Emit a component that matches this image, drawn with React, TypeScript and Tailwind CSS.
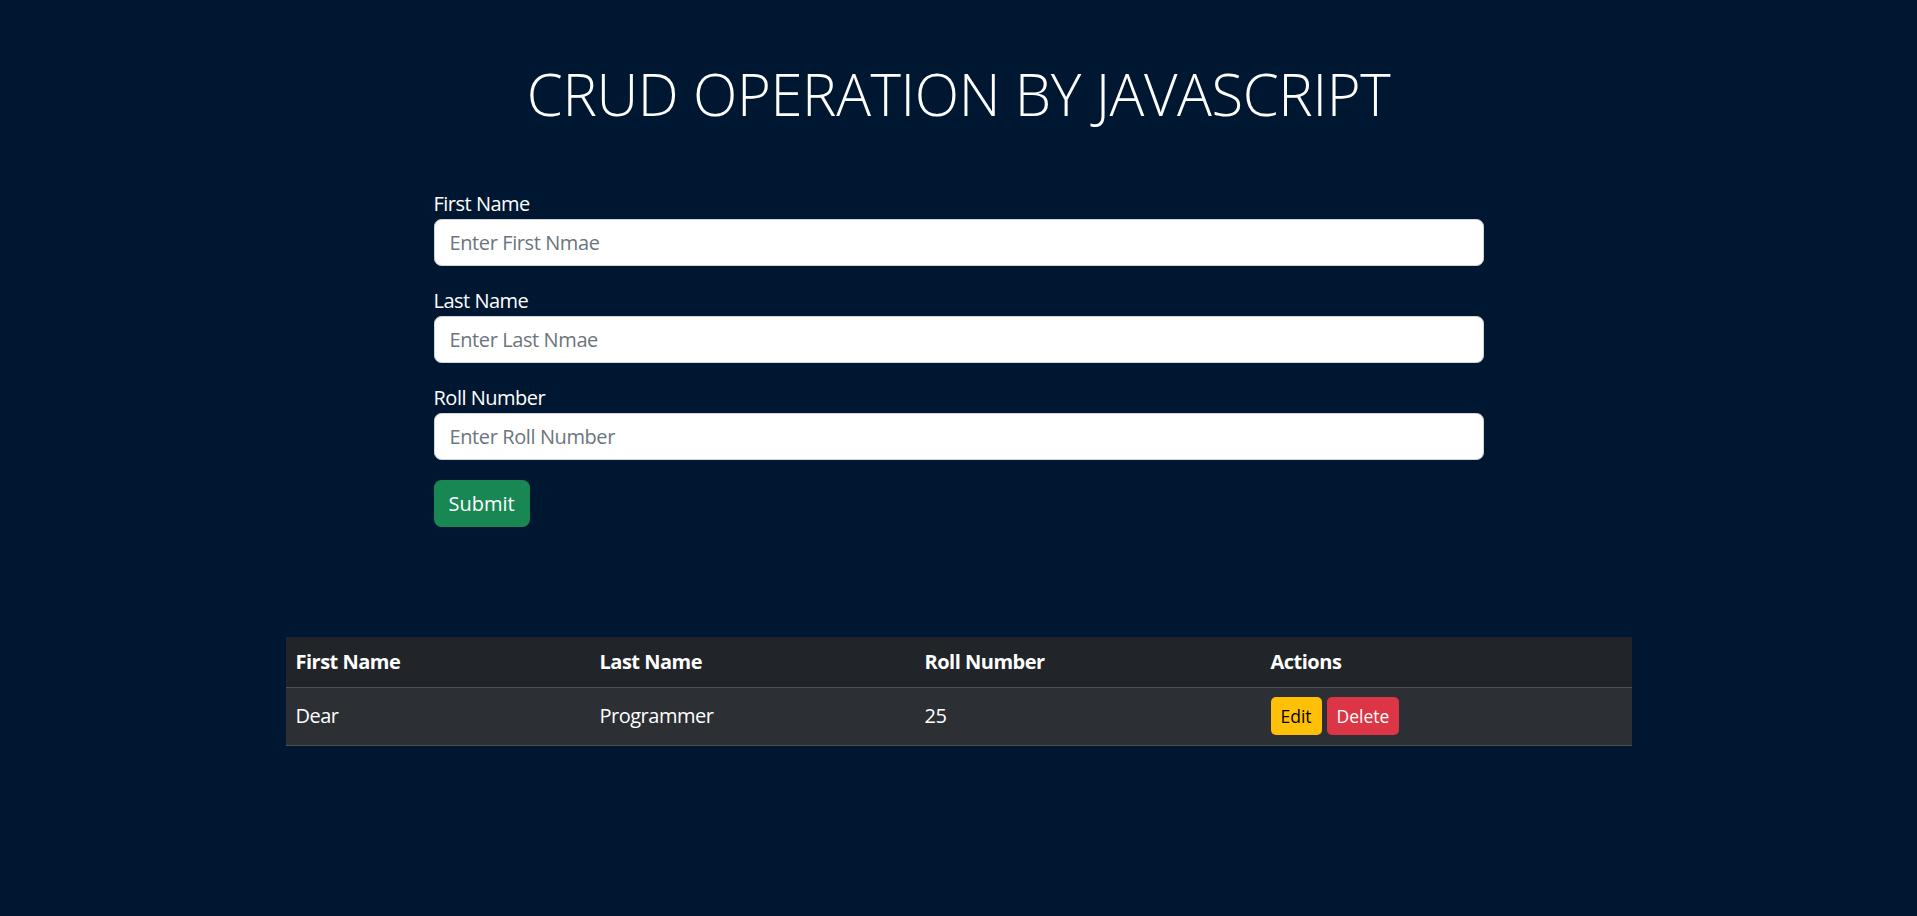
export default function App() {
  const rows = [{ first: 'Dear', last: 'Programmer', roll: '25' }];

  const fields = [
    { label: 'First Name', placeholder: 'Enter First Nmae' },
    { label: 'Last Name', placeholder: 'Enter Last Nmae' },
    { label: 'Roll Number', placeholder: 'Enter Roll Number' },
  ];

  return (
    <div
      className="min-h-screen bg-[#001731] pt-[58px] text-white"
      style={{ fontFamily: '"Open Sans", "Noto Sans", sans-serif' }}
    >
      <h1 className="text-center text-[58px] leading-[72px] font-light tracking-[-0.4px]">
        CRUD OPERATION BY JAVASCRIPT
      </h1>

      <form className="mx-auto mt-[59px] w-[1050px]" onSubmit={(e) => e.preventDefault()}>
        {fields.map((f) => (
          <div key={f.label} className="mb-[20px]">
            <label className="block text-[20px] leading-[30px] tracking-[-0.5px]">{f.label}</label>
            <input
              type="text"
              placeholder={f.placeholder}
              className="block h-[47px] w-full rounded-[7.5px] border border-[#ced4da] bg-white px-[15px] text-[20px] tracking-[-0.4px] text-[#212529] placeholder:text-[#6c757d] outline-none"
            />
          </div>
        ))}
        <button
          type="submit"
          className="h-[47px] rounded-[7.5px] bg-[#198754] px-[15px] text-[20px] text-white"
        >
          Submit
        </button>
      </form>

      <table className="mx-auto mt-[110px] w-[1346px] border-collapse text-left text-[20px] tracking-[-0.5px]">
        <thead>
          <tr className="h-[50px] border-b border-[#4b4f52] bg-[#212529]">
            <th className="w-[304px] px-[10px] font-bold">First Name</th>
            <th className="w-[325px] px-[10px] font-bold">Last Name</th>
            <th className="w-[346px] px-[10px] font-bold">Roll Number</th>
            <th className="px-[10px] font-bold">Actions</th>
          </tr>
        </thead>
        <tbody>
          {rows.map((r) => (
            <tr key={r.roll} className="h-[58px] border-b border-[#4b4f52] bg-[#2c3034]">
              <td className="px-[10px]">{r.first}</td>
              <td className="px-[10px]">{r.last}</td>
              <td className="px-[10px]">{r.roll}</td>
              <td className="px-[10px]">
                <div className="flex gap-[5px] tracking-normal">
                  <button className="h-[38px] rounded-[5px] bg-[#ffc107] px-[10px] text-[17.5px] text-black">
                    Edit
                  </button>
                  <button className="h-[38px] rounded-[5px] bg-[#dc3545] px-[10px] text-[17.5px] text-white">
                    Delete
                  </button>
                </div>
              </td>
            </tr>
          ))}
        </tbody>
      </table>
    </div>
  );
}
